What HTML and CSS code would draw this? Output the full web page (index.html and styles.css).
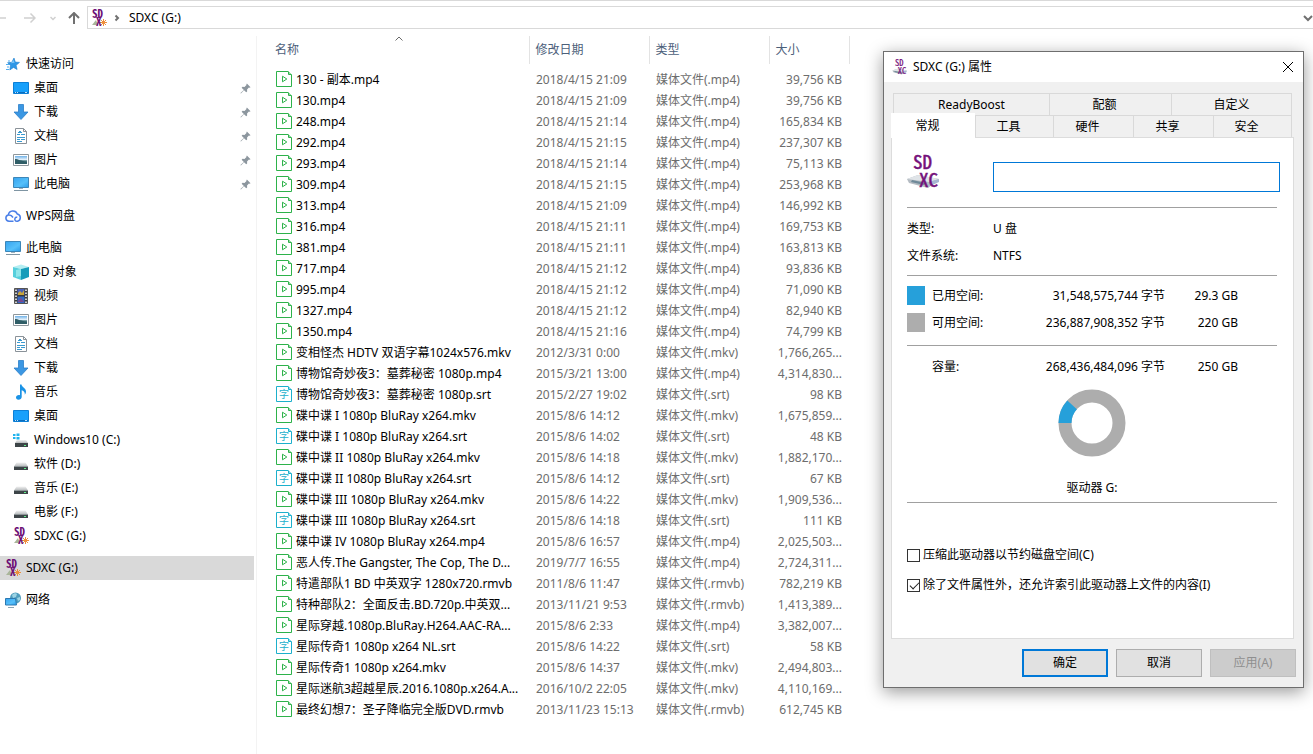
FILE: index.html
```html
<!DOCTYPE html>
<html lang="zh-CN">
<head>
    <meta charset="UTF-8">
    <meta name="viewport" content="width=device-width, initial-scale=1.0">
    <title>SDXC (G:)</title>
    <link rel="stylesheet" href="styles.css">
</head>
<body>
    <!-- icons -->
    <svg class="sprite" aria-hidden="true">
        <defs>
            <linearGradient id="blue" x1="0" y1="0" x2="1" y2="1">
                <stop offset="0" stop-color="#36a3ef"/><stop offset="0.6" stop-color="#56c0fa"/><stop offset="1" stop-color="#2b9be8"/>
            </linearGradient>
            <linearGradient id="sky" x1="0" y1="0" x2="0" y2="1">
                <stop offset="0" stop-color="#6fb2e8"/><stop offset="0.45" stop-color="#e4f1fa"/><stop offset="0.6" stop-color="#4f7f86"/><stop offset="1" stop-color="#2c5168"/>
            </linearGradient>
            <linearGradient id="metal" x1="0" y1="0" x2="0" y2="1">
                <stop offset="0" stop-color="#f2f2f2"/><stop offset="1" stop-color="#b4b8ba"/>
            </linearGradient>
        </defs>
        <symbol id="star" viewBox="0 0 16 16">
            <path d="M9 2l1.300 4.100 4.200.3-3.400 2.900 1 4.200-3.600-2.100-3.700 2.600.7-4.500L2.600 6.700l4.200-.4z" fill="#2f97e6" stroke="#1c7fd0" stroke-width=".6"/>
            <path d="M8.700 4l.9 2.700-3.800.6z" fill="#7cc6fa"/>
            <path d="M3 5h2M1 8.500h3M2 11h2M1 13.500h3" stroke="#52acee"/>
        </symbol>
        <symbol id="desktop" viewBox="0 0 16 16">
            <path d="M.5 2.500h15v11H.5z" fill="#18a0fb" stroke="#0c7fd6"/>
            <path d="M1 12.500h14" stroke="#0b6dbd"/>
            <path d="M2 12.500h1M4 12.500h1M12 12.500h2" stroke="#bfe4ff"/>
        </symbol>
        <symbol id="download" viewBox="0 0 16 16">
            <path d="M5.500 .5h5v7.500h4.500L8 15.500 1 8h4.500z" fill="#3b97e3" stroke="#2b7fc9" stroke-width=".8"/>
        </symbol>
        <symbol id="document" viewBox="0 0 16 16">
            <path d="M2.500.5h8l3 3v12h-11z" fill="#fff" stroke="#8a9299"/>
            <path d="M10.500.5v3h3" fill="none" stroke="#8a9299"/>
            <path d="M4 6.500h3M8 6.500h4M4 9.500h8M4 11.500h3M8 11.500h4M4 13.500h5M6 3.500h2M5 4.500h4" stroke="#3a9ad0"/>
        </symbol>
        <symbol id="picture" viewBox="0 0 16 16">
            <path d="M.5 2.500h15v11H.5z" fill="#fff" stroke="#8f979c"/>
            <path d="M2 4h12v8H2z" fill="url(#sky)"/>
            <path d="M2 7c3 0 6 2 12 3v2H2z" fill="#2f5d66"/>
        </symbol>
        <symbol id="pc" viewBox="0 0 16 16">
            <path d="M.5 1.500h15v10H.5z" fill="url(#blue)" stroke="#3c86b8"/>
            <path d="M6 12.500h4" stroke="#9fb3c0"/>
            <path d="M1 14.500h14" stroke="#7f95a3"/>
        </symbol>
        <symbol id="cloud" viewBox="0 0 16 16">
            <path d="M8.500 13.200H4a3.200 3.200 0 0 1-.7-6.300A4.700 4.700 0 0 1 12.300 6a3.700 3.700 0 0 1 .3 7.200c-2.500.4-3.300-1.600-2.500-3 .5-.9 1.500-1.200 2.200-.8M3.500 7c2-.3 3.500.8 4.500 2.500" fill="none" stroke="#4a7fe8" stroke-width="1.500"/>
        </symbol>
        <symbol id="cube" viewBox="0 0 16 16">
            <path d="M0 3l8-2.500L16 3 8 5z" fill="#b5eef2"/>
            <path d="M0 3l8 2v11L0 13z" fill="#56cfdc"/>
            <path d="M16 3L8 5v11l8-3z" fill="#159cba"/>
            <path d="M3 6l5-1v7l-5 1z" fill="#8fe6ea"/>
        </symbol>
        <symbol id="video" viewBox="0 0 16 16">
            <path d="M1.500.5h13v15h-13z" fill="#3a3a3a" stroke="#555"/>
            <path d="M4.500 1h7v6h-7z" fill="#4b62b8"/><path d="M4.500 8.500h7V15h-7z" fill="#3568c4"/>
            <path d="M5 5l2-2 2 2 2-3v5H5z" fill="#c9a53a"/><path d="M5 13l3-3 3 4H5z" fill="#7a4a8c"/>
            <path d="M3 1.500v14M13 1.500v14" stroke="#fff" stroke-width="1.500" stroke-dasharray="1.500 1.500"/>
        </symbol>
        <symbol id="music" viewBox="0 0 16 16">
            <path d="M7 .5h1.500c.3 2.500 4.500 3.500 4.500 7 0 1.500-.6 2.500-1.200 3.200.4-2.700-1.300-4-3.100-4.500V13c0 1.500-1.500 2.700-3.200 2.700S3 14.700 3 13.500 4.300 11 5.800 11c.5 0 .9.100 1.200.2z" fill="#1a93e6"/>
        </symbol>
        <symbol id="drive" viewBox="0 0 16 16">
            <path d="M3.500 6.500h9l2.500 4H1z" fill="url(#metal)"/>
            <path d="M1 10h14v4H1z" fill="#3d4548"/>
            <path d="M1 10.500h14" stroke="#8e9698"/>
            <path d="M11 12.500h2" stroke="#5ff08a"/>
        </symbol>
        <symbol id="windrive" viewBox="0 0 16 16">
            <path d="M4 8h9l2 3H2z" fill="url(#metal)"/>
            <path d="M2 11h13v4H2z" fill="#3d4548"/><path d="M11 13.500h2" stroke="#5ff08a"/>
            <path d="M0 2h2.500v2H0zM3.500 1.500h3V4h-3zM0 5h2.500v2H0zM3.500 5h3v2.500h-3z" fill="#1fb3ee"/>
        </symbol>
        <symbol id="sdxc" viewBox="0 0 16 16">
            <path d="M1 15l4-5 2 5z" fill="#a9b59a"/>
            <path d="M12.500 9v7M9 12.500h7M10 10l5 5M15 10l-5 5" stroke="#ee8f3c"/>
            <text x="1" y="8" class="sd-small">SD</text>
            <text x="5" y="16" class="sd-small">X</text>
        </symbol>
        <symbol id="sdxc-drive" viewBox="0 0 34 36">
            <path d="M0 26l11-4 21 4-11 9-19-5z" fill="#b4bbc2"/>
            <path d="M0 26l11-4 21 4-10 3z" fill="#e0e4e8"/>
            <path d="M5 27l14 3-2 2-13-3z" fill="#6f8a99"/>
            <path d="M22 29l10-3v3l-11 5z" fill="#a6b6d2"/>
            <text x="6" y="16" class="sd-large">SD</text>
            <text x="12" y="34" class="sd-large">XC</text>
        </symbol>
        <symbol id="network" viewBox="0 0 16 16">
            <circle cx="10.500" cy="6" r="5.500" fill="#4f9dbd"/>
            <path d="M7 3c2-2 4-2 5-1l-1 3-3 1zM12 6l3-1v3l-2 1z" fill="#9cd3e4"/>
            <path d="M.5 6.500h10l1 6.500H.5z" fill="url(#blue)" stroke="#2c78b0"/>
            <path d="M3 15.500h6" stroke="#8aa4b4"/>
        </symbol>
        <symbol id="pin" viewBox="0 0 12 12">
            <path d="M7.500.5l4 4-1 .6-.8-.1-2 2.200.1 2.100-1 .9-2.400-2.400L1 11.500.5 11l3.700-3.400-2.400-2.400 1-1 2.100.1 2.200-2-.2-.8z" fill="#8c969e"/>
        </symbol>
        <symbol id="media" viewBox="0 0 16 16">
            <path d="M.5.500h11.500l3.500 3.500v11.500H.5z" fill="#fff" stroke="#2db24a"/>
            <path d="M12.500.5v3h3" fill="none" stroke="#2db24a"/>
            <path d="M6.500 5.200v5.600l4.300-2.800z" fill="none" stroke="#2db24a"/>
        </symbol>
        <symbol id="subtitle" viewBox="0 0 16 16">
            <path d="M.5.500h11.500l3.500 3.500v11.500H.5z" fill="#fff" stroke="#1cb0cc"/>
            <path d="M12.500.5v3h3" fill="none" stroke="#1cb0cc"/>
            <text x="3" y="12" class="sub-text">字</text>
        </symbol>
    </svg>

    <header class="toolbar">
        <button class="nav-btn" type="button" aria-label="后退">
            <svg width="12" height="12" viewBox="0 0 12 12"><path d="M0 6h12" class="faint"/></svg>
        </button>
        <button class="nav-btn forward" type="button" aria-label="前进">
            <svg width="12" height="12" viewBox="0 0 12 12"><path d="M0 6h11M6.500 1.500L11 6l-4.500 4.500" class="faint"/></svg>
        </button>
        <button class="nav-btn recent" type="button" aria-label="最近浏览的位置">
            <svg width="6" height="12" viewBox="0 0 6 12"><path d="M.5 5L3 7.500 5.500 5" class="faint"/></svg>
        </button>
        <button class="nav-btn up" type="button" aria-label="上移">
            <svg width="12" height="12" viewBox="0 0 12 12"><path d="M6 12V1M1 6l5-5 5 5" class="dark"/></svg>
        </button>
        <div class="address">
            <svg class="icon"><use href="#sdxc"/></svg>
            <svg width="6" height="8" viewBox="0 0 6 8"><path d="M1.500 1.500L4 4 1.500 6.500" class="dark"/></svg>
            <a href="#">SDXC (G:)</a>
            <button class="nav-btn" type="button" aria-label="以前的位置">
                <svg width="10" height="8" viewBox="0 0 10 8"><path d="M1 2l4 4 4-4" class="dark"/></svg>
            </button>
        </div>
    </header>

    <main class="explorer">
        <nav class="tree">
            <div class="group">
                <a href="#"><svg class="icon"><use href="#star"/></svg>快速访问</a>
                <a href="#" class="child"><svg class="icon"><use href="#desktop"/></svg>桌面<svg class="pin"><use href="#pin"/></svg></a>
                <a href="#" class="child"><svg class="icon"><use href="#download"/></svg>下载<svg class="pin"><use href="#pin"/></svg></a>
                <a href="#" class="child"><svg class="icon"><use href="#document"/></svg>文档<svg class="pin"><use href="#pin"/></svg></a>
                <a href="#" class="child"><svg class="icon"><use href="#picture"/></svg>图片<svg class="pin"><use href="#pin"/></svg></a>
                <a href="#" class="child"><svg class="icon"><use href="#pc"/></svg>此电脑<svg class="pin"><use href="#pin"/></svg></a>
            </div>
            <div class="group">
                <a href="#"><svg class="icon"><use href="#cloud"/></svg>WPS网盘</a>
            </div>
            <div class="group">
                <a href="#"><svg class="icon"><use href="#pc"/></svg>此电脑</a>
                <a href="#" class="child"><svg class="icon"><use href="#cube"/></svg>3D 对象</a>
                <a href="#" class="child"><svg class="icon"><use href="#video"/></svg>视频</a>
                <a href="#" class="child"><svg class="icon"><use href="#picture"/></svg>图片</a>
                <a href="#" class="child"><svg class="icon"><use href="#document"/></svg>文档</a>
                <a href="#" class="child"><svg class="icon"><use href="#download"/></svg>下载</a>
                <a href="#" class="child"><svg class="icon"><use href="#music"/></svg>音乐</a>
                <a href="#" class="child"><svg class="icon"><use href="#desktop"/></svg>桌面</a>
                <a href="#" class="child"><svg class="icon"><use href="#windrive"/></svg>Windows10 (C:)</a>
                <a href="#" class="child"><svg class="icon"><use href="#drive"/></svg>软件 (D:)</a>
                <a href="#" class="child"><svg class="icon"><use href="#drive"/></svg>音乐 (E:)</a>
                <a href="#" class="child"><svg class="icon"><use href="#drive"/></svg>电影 (F:)</a>
                <a href="#" class="child"><svg class="icon"><use href="#sdxc"/></svg>SDXC (G:)</a>
            </div>
            <div class="group">
                <a href="#" class="selected"><svg class="icon"><use href="#sdxc"/></svg>SDXC (G:)</a>
            </div>
            <div class="group">
                <a href="#"><svg class="icon"><use href="#network"/></svg>网络</a>
            </div>
        </nav>

        <section class="files">
            <table>
                <thead>
                    <tr>
                        <th class="col-name">名称<svg class="sort" viewBox="0 0 8 5"><path d="M.5 4.500L4 1l3.500 3.500"/></svg></th>
                        <th class="col-date">修改日期</th>
                        <th class="col-type">类型</th>
                        <th class="col-size">大小</th>
                    </tr>
                </thead>
                <tbody id="fileList"></tbody>
            </table>
        </section>
    </main>

    <section class="dialog" role="dialog" aria-labelledby="dialogTitle">
        <header class="title-bar">
            <svg class="icon"><use href="#sdxc-drive"/></svg>
            <h1 id="dialogTitle">SDXC (G:) 属性</h1>
            <button class="close" type="button" aria-label="关闭">
                <svg width="12" height="12" viewBox="0 0 12 12"><path d="M1 1l10 10M11 1L1 11"/></svg>
            </button>
        </header>

        <div class="dialog-body">
            <div class="tabs" role="tablist">
                <div class="tab-row back">
                    <button type="button" role="tab">ReadyBoost</button>
                    <button type="button" role="tab">配额</button>
                    <button type="button" role="tab">自定义</button>
                </div>
                <div class="tab-row front">
                    <button type="button" role="tab" class="active" aria-selected="true">常规</button>
                    <button type="button" role="tab">工具</button>
                    <button type="button" role="tab">硬件</button>
                    <button type="button" role="tab">共享</button>
                    <button type="button" role="tab">安全</button>
                </div>
            </div>

            <div class="panel" role="tabpanel">
                <div class="section head">
                    <svg class="drive-icon"><use href="#sdxc-drive"/></svg>
                    <input type="text" class="label-input" aria-label="卷标">
                </div>
                <dl class="section info">
                    <dt>类型:</dt><dd>U 盘</dd>
                    <dt>文件系统:</dt><dd>NTFS</dd>
                </dl>
                <div class="section usage">
                    <div class="usage-row"><span class="swatch used"></span><span>已用空间:</span><span class="num">31,548,575,744 字节</span><span class="num">29.3 GB</span></div>
                    <div class="usage-row"><span class="swatch free"></span><span>可用空间:</span><span class="num">236,887,908,352 字节</span><span class="num">220 GB</span></div>
                </div>
                <div class="section capacity">
                    <div class="usage-row"><span></span><span>容量:</span><span class="num">268,436,484,096 字节</span><span class="num">250 GB</span></div>
                    <svg class="donut" viewBox="0 0 68 68">
                        <circle cx="34" cy="34" r="27" class="ring-free"/>
                        <circle cx="34" cy="34" r="27" class="ring-used" pathLength="100" stroke-dasharray="11.800 100" transform="rotate(180 34 34)"/>
                    </svg>
                    <p class="drive-name">驱动器 G:</p>
                </div>
                <div class="checks">
                    <label><input type="checkbox">压缩此驱动器以节约磁盘空间(C)</label>
                    <label><input type="checkbox" checked>除了文件属性外，还允许索引此驱动器上文件的内容(I)</label>
                </div>
            </div>

            <footer class="actions">
                <button type="button" class="default">确定</button>
                <button type="button">取消</button>
                <button type="button" disabled>应用(A)</button>
            </footer>
        </div>
    </section>

    <script>
        // name, modified, size
        const files = [
            ['130 - 副本.mp4', '2018/4/15 21:09', '39,756 KB'],
            ['130.mp4', '2018/4/15 21:09', '39,756 KB'],
            ['248.mp4', '2018/4/15 21:14', '165,834 KB'],
            ['292.mp4', '2018/4/15 21:15', '237,307 KB'],
            ['293.mp4', '2018/4/15 21:14', '75,113 KB'],
            ['309.mp4', '2018/4/15 21:15', '253,968 KB'],
            ['313.mp4', '2018/4/15 21:09', '146,992 KB'],
            ['316.mp4', '2018/4/15 21:11', '169,753 KB'],
            ['381.mp4', '2018/4/15 21:11', '163,813 KB'],
            ['717.mp4', '2018/4/15 21:12', '93,836 KB'],
            ['995.mp4', '2018/4/15 21:12', '71,090 KB'],
            ['1327.mp4', '2018/4/15 21:12', '82,940 KB'],
            ['1350.mp4', '2018/4/15 21:16', '74,799 KB'],
            ['变相怪杰 HDTV 双语字幕1024x576.mkv', '2012/3/31 0:00', '1,766,265...'],
            ['博物馆奇妙夜3：墓葬秘密 1080p.mp4', '2015/3/21 13:00', '4,314,830...'],
            ['博物馆奇妙夜3：墓葬秘密 1080p.srt', '2015/2/27 19:02', '98 KB'],
            ['碟中谍 I 1080p BluRay x264.mkv', '2015/8/6 14:12', '1,675,859...'],
            ['碟中谍 I 1080p BluRay x264.srt', '2015/8/6 14:02', '48 KB'],
            ['碟中谍 II 1080p BluRay x264.mkv', '2015/8/6 14:18', '1,882,170...'],
            ['碟中谍 II 1080p BluRay x264.srt', '2015/8/6 14:12', '67 KB'],
            ['碟中谍 III 1080p BluRay x264.mkv', '2015/8/6 14:22', '1,909,536...'],
            ['碟中谍 III 1080p BluRay x264.srt', '2015/8/6 14:18', '111 KB'],
            ['碟中谍 IV 1080p BluRay x264.mp4', '2015/8/6 16:57', '2,025,503...'],
            ['恶人传.The Gangster, The Cop, The D...', '2019/7/7 16:55', '2,724,311...', 'mp4'],
            ['特遣部队1 BD 中英双字 1280x720.rmvb', '2011/8/6 11:47', '782,219 KB'],
            ['特种部队2：全面反击.BD.720p.中英双...', '2013/11/21 9:53', '1,413,389...', 'rmvb'],
            ['星际穿越.1080p.BluRay.H264.AAC-RA...', '2015/8/6 2:33', '3,382,007...', 'mp4'],
            ['星际传奇1 1080p x264 NL.srt', '2015/8/6 14:22', '58 KB'],
            ['星际传奇1 1080p x264.mkv', '2015/8/6 14:37', '2,494,803...'],
            ['星际迷航3超越星辰.2016.1080p.x264.A...', '2016/10/2 22:05', '4,110,169...', 'mkv'],
            ['最终幻想7：圣子降临完全版DVD.rmvb', '2013/11/23 15:13', '612,745 KB']
        ];

        document.getElementById('fileList').innerHTML = files.map(([name, date, size, type]) => {
            const ext = type || name.split('.').pop();
            const icon = ext === 'srt' ? 'subtitle' : 'media';
            return `<tr>
                <td><div class="file-name"><svg class="icon"><use href="#${icon}"/></svg>${name}</div></td>
                <td>${date}</td>
                <td>媒体文件(.${ext})</td>
                <td class="size">${size}</td>
            </tr>`;
        }).join('');
    </script>
</body>
</html>
```
FILE: styles.css
```css
* {
    box-sizing: border-box;
}

body {
    margin: 0;
    min-height: 100vh;
    display: flex;
    flex-direction: column;
    background-color: #fff;
    color: #000;
    font-family: "Noto Sans", "Noto Sans CJK SC", sans-serif;
    font-size: 12px;
    line-height: 20px;
    overflow: hidden;
}

button,
input {
    font: inherit;
    color: inherit;
}

a {
    color: inherit;
    text-decoration: none;
}

.sprite {
    position: absolute;
    width: 0;
    height: 0;
}

symbol {
    overflow: visible;
}

.icon {
    width: 16px;
    height: 16px;
    flex: none;
    overflow: visible;
}

.sd-small {
    font: bold 11px "Noto Sans Mono CJK SC", "Liberation Mono", monospace;
    fill: #6d0f75;
}

.sd-large {
    font: 19px "Noto Sans Mono CJK SC", "Liberation Mono", monospace;
    fill: #74107a;
    stroke: #74107a;
    stroke-width: 0.5px;
}

.sub-text {
    font: 10px "Noto Sans CJK SC", sans-serif;
    fill: #1cb0cc;
}

/* toolbar */
.toolbar {
    display: flex;
    align-items: center;
    height: 36px;
    padding-bottom: 2px;
    border-top: 1px solid #d9d9d9;
}

.nav-btn {
    display: flex;
    padding: 0;
    border: none;
    background: none;
    margin-left: -6px;
}

.nav-btn.forward {
    margin-left: 18px;
}

.nav-btn.recent {
    margin-left: 14px;
}

.nav-btn.up {
    margin-left: 12px;
}

.toolbar path {
    fill: none;
}

.faint {
    stroke: #d0d0d0;
    stroke-width: 1.5;
}

.dark {
    stroke: #707070;
    stroke-width: 2;
}

.address {
    flex: 1;
    display: flex;
    align-items: center;
    height: 23px;
    margin-left: 7px;
    padding-left: 3px;
    border: 1px solid #d9d9d9;
    border-right: none;
}

.toolbar .address path[fill] {
    fill: #a9b59a;
}

.address > svg + svg {
    margin: 0 9px 0 7px;
}

.address .nav-btn {
    margin-left: auto;
}

/* folder tree */
.explorer {
    flex: 1;
    display: flex;
}

.tree {
    width: 257px;
    padding: 16px 2px 0 0;
    border-right: 1px solid #f3f3f3;
}

.group {
    margin-bottom: 8px;
}

.group a {
    display: flex;
    align-items: center;
    gap: 5px;
    height: 24px;
    padding: 0 3px 0 5px;
}

.group a.child {
    padding-left: 13px;
}

.group a.selected {
    background-color: #d9d9d9;
}

.pin {
    width: 11px;
    height: 11px;
    margin-left: auto;
}

/* file list */
.files {
    flex: 1;
    padding-left: 9px;
}

table {
    width: 583px;
    table-layout: fixed;
    border-collapse: collapse;
}

th {
    position: relative;
    height: 28px;
    padding: 0 0 0 6px;
    border-right: 1px solid #e3e3e3;
    color: #4c607a;
    font-weight: normal;
    text-align: left;
}

.col-name {
    width: 263px;
}

.col-date,
.col-type {
    width: 120px;
}

.col-size {
    width: 80px;
}

th:first-child {
    padding-left: 9px;
}

.sort {
    position: absolute;
    top: 0;
    left: 129px;
    width: 8px;
    height: 5px;
    fill: none;
    stroke: #6a6a6a;
}

tbody::before {
    content: "";
    display: block;
    height: 5px;
}

td {
    height: 21px;
    padding: 0 0 0 7px;
    color: #6d6d6d;
    line-height: 21px;
    white-space: nowrap;
}

td:first-child {
    padding-left: 10px;
    color: #000;
}

td.size {
    padding: 0 7px 0 0;
    text-align: right;
}

.file-name {
    display: flex;
    gap: 4px;
}

.file-name .icon {
    margin-top: 2px;
}

/* properties window */
.dialog {
    position: absolute;
    top: 51px;
    right: 9px;
    width: 421px;
    border: 1px solid #6e6e6e;
    background-color: #f0f0f0;
    box-shadow: 0 4px 16px rgba(0, 0, 0, 0.4);
}

.title-bar {
    display: flex;
    align-items: center;
    gap: 5px;
    height: 30px;
    padding: 0 9px 0 8px;
    background-color: #fff;
}

.title-bar h1 {
    margin: 0;
    font-size: 12px;
    font-weight: normal;
}

.close {
    display: flex;
    margin-left: auto;
    padding: 0;
    border: none;
    background: none;
}

.close path {
    fill: none;
    stroke: #000;
}

.dialog-body {
    padding: 11px 9px 10px 7px;
}

.tabs {
    padding: 0 2px;
}

.tab-row {
    display: grid;
    height: 22px;
}

.tab-row.back {
    grid-template-columns: 156fr 122fr 121fr;
}

.tab-row.front {
    grid-template-columns: 82fr 78fr 80fr 80fr 79fr;
}

.tab-row button {
    padding: 0;
    border: 1px solid #d9d9d9;
    border-width: 1px 0 0 1px;
    background-color: #f0f0f0;
}

.tab-row button:last-child {
    border-right-width: 1px;
}

.front button,
.back button:nth-child(2) {
    padding-right: 12px;
}

.tab-row .active {
    position: relative;
    margin: -2px 0 -1px -2px;
    border-color: #fff;
    background-color: #fff;
}

.panel {
    padding: 0 16px 38px 15px;
    border: 1px solid #dcdcdc;
    background-color: #fff;
}

.section {
    margin: 0;
    border-bottom: 1px solid #a0a0a0;
}

.head {
    display: grid;
    grid-template-columns: 86px 1fr;
    padding: 15px 0;
}

.drive-icon {
    width: 34px;
    height: 36px;
}

.label-input {
    width: 287px;
    height: 30px;
    margin-top: 9px;
    border: 1px solid #0078d7;
    outline: none;
}

.info {
    display: grid;
    grid-template-columns: 86px 1fr;
    padding: 7px 0 6px;
    line-height: 27px;
}

.info dd {
    margin: 0;
}

.usage {
    padding: 6px 0 9px;
}

.usage-row {
    display: grid;
    grid-template-columns: 25px 83px 150px 73px;
    align-items: center;
    height: 27px;
}

.num {
    text-align: right;
}

.swatch {
    width: 18px;
    height: 19px;
}

.used {
    background-color: #26a0da;
}

.free {
    background-color: #adadad;
}

.capacity {
    padding: 7px 0 4px;
}

.donut {
    display: block;
    width: 68px;
    height: 68px;
    margin: 9px auto 21px;
}

.donut circle {
    fill: none;
    stroke-width: 13;
}

.donut .ring-free {
    stroke: #adadad;
}

.donut .ring-used {
    stroke: #26a0da;
}

.drive-name {
    margin: 0;
    text-align: center;
}

.checks {
    padding-top: 37px;
}

.checks label {
    display: flex;
    align-items: center;
    gap: 3px;
    height: 30px;
    white-space: nowrap;
}

.checks input {
    appearance: none;
    position: relative;
    width: 13px;
    height: 13px;
    margin: 0;
    border: 1px solid #333;
    background-color: #fff;
}

.checks input:checked::after {
    content: "";
    position: absolute;
    top: 2px;
    left: 2px;
    width: 8px;
    height: 4px;
    border: solid #222;
    border-width: 0 0 1px 1px;
    transform: rotate(-45deg);
}

.actions {
    display: flex;
    justify-content: flex-end;
    gap: 8px;
    margin-right: -2px;
    padding-top: 10px;
}

.actions button {
    width: 86px;
    height: 28px;
    padding: 0;
    border: 1px solid #adadad;
    background-color: #e1e1e1;
}

.actions .default {
    border: 2px solid #0078d7;
}

.actions button:disabled {
    border-color: #bfbfbf;
    background-color: #ccc;
    color: #8f8f8f;
}
```
